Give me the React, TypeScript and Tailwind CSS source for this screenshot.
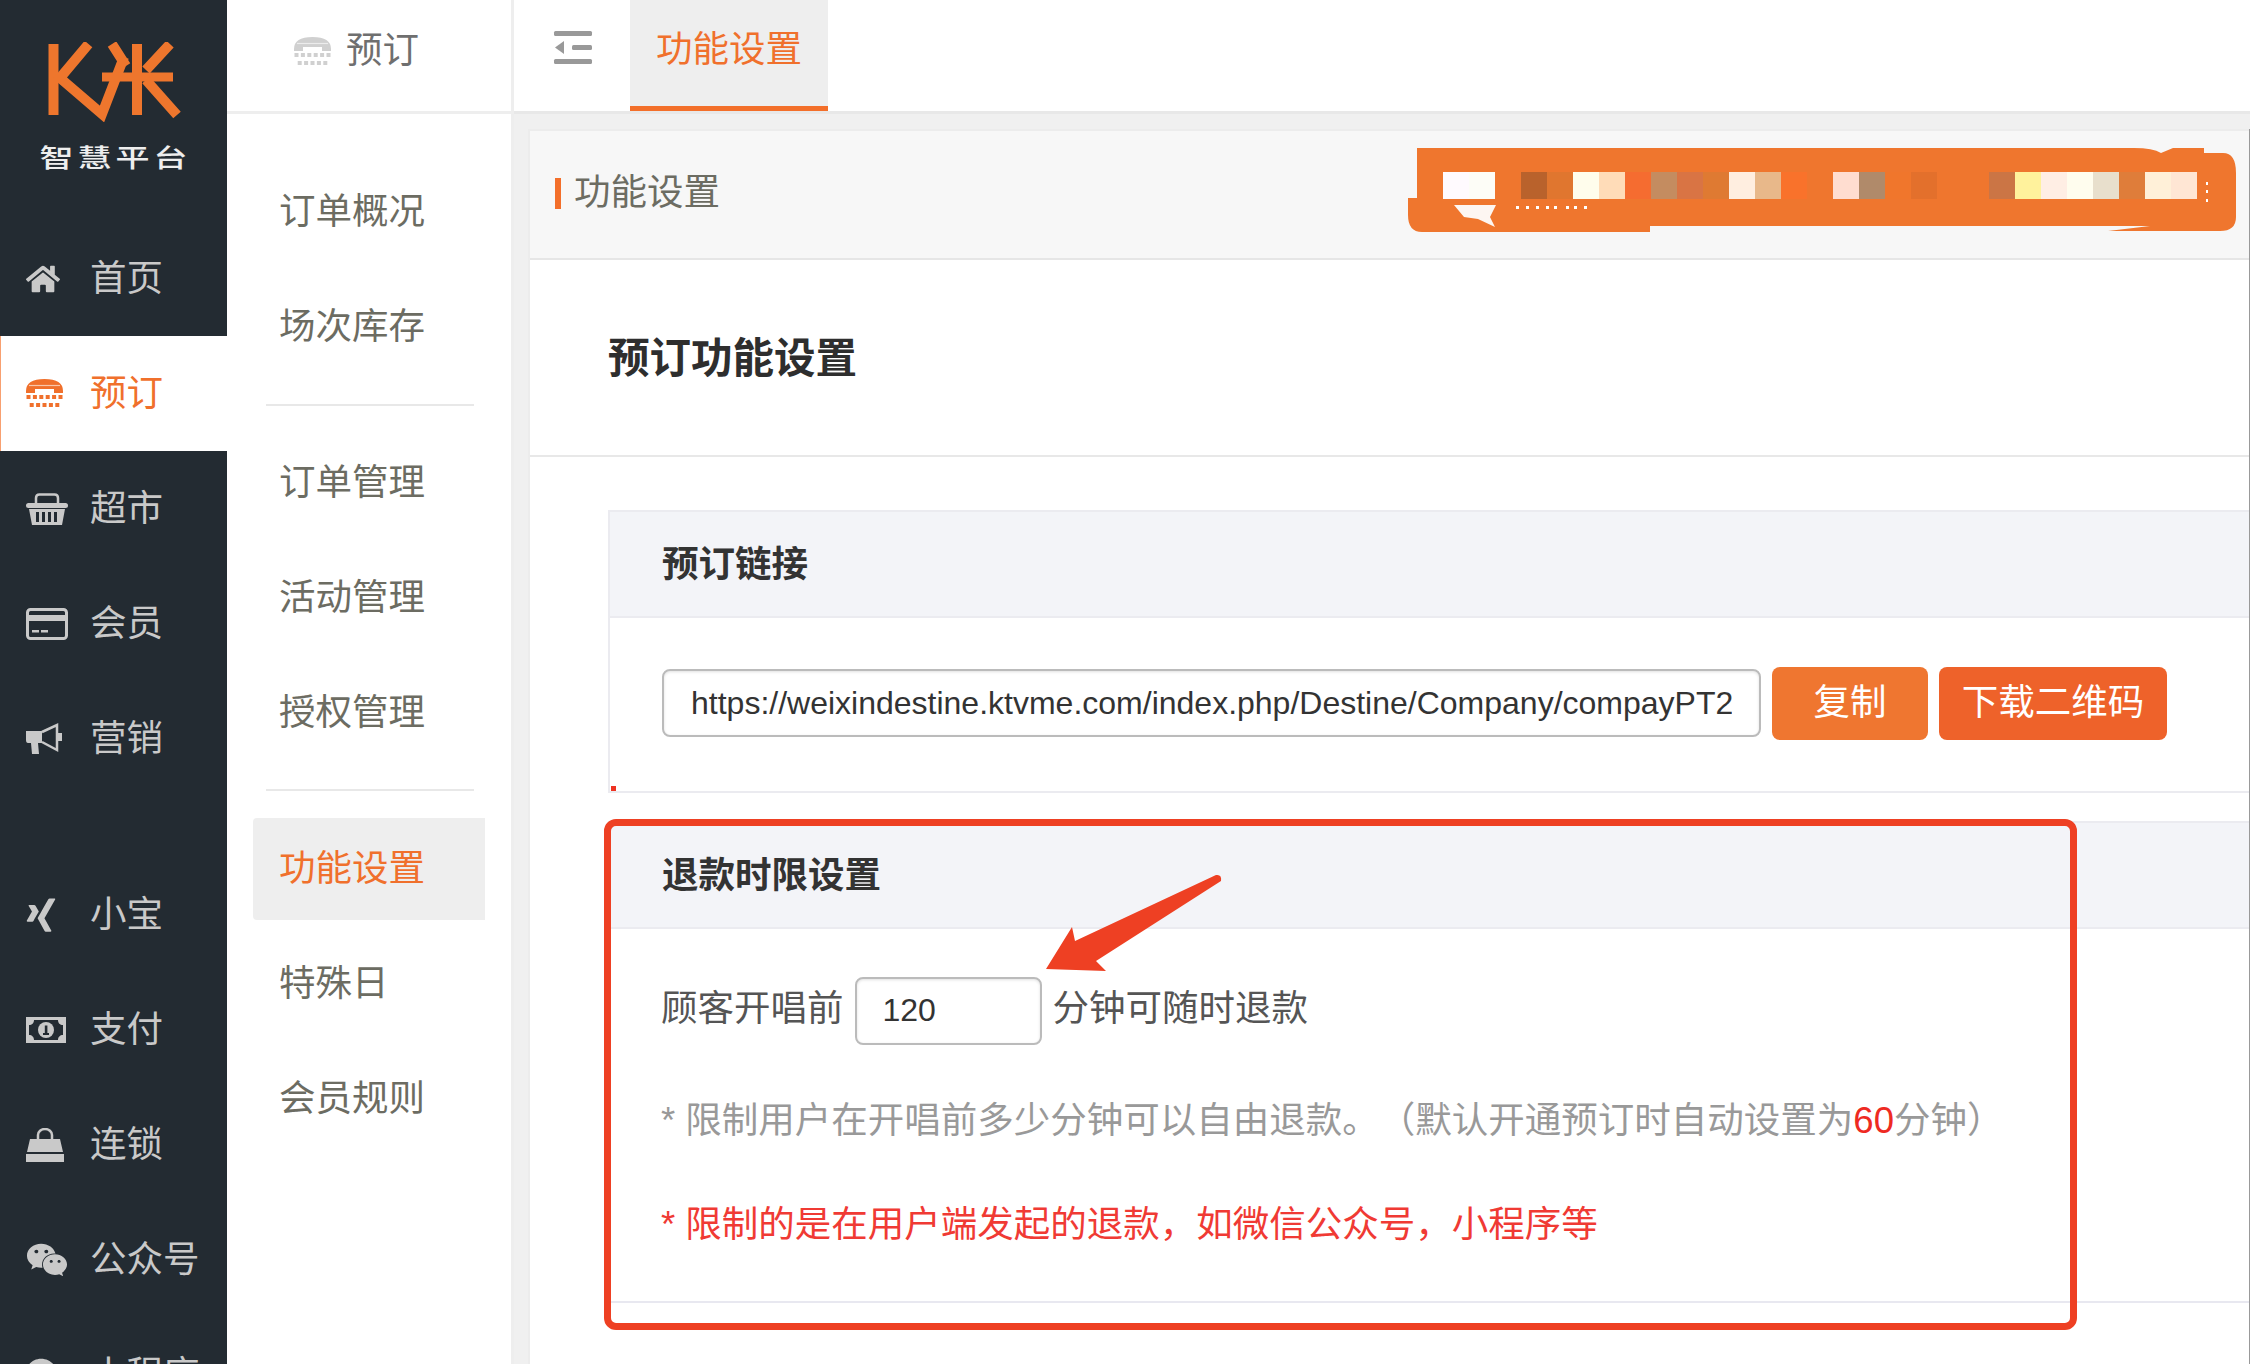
import React from "react";
import { FaHome, FaWeixin, FaXing } from "react-icons/fa";

const fontStack = `"Liberation Sans", "Noto Sans CJK SC", sans-serif`;

const TtyIcon = ({ className }: { className?: string }) => (
  <svg width="37" height="29" viewBox="0 0 37 29" fill="currentColor" className={className}>
    <path d="M0 12Q0 0 18.5 0T37 12V14H28V10H9V14H0z" />
    <path d="M3 6.5H34" stroke="#ffffff" strokeOpacity="0.6" strokeWidth="1.2" />
    {[0, 1, 2, 3, 4, 5].map((i) => (
      <rect key={i} x={0.5 + i * 6.4} y={16} width={4} height={4} />
    ))}
    {[0, 1, 2, 3, 4].map((i) => (
      <rect key={i} x={3.7 + i * 6.4} y={24} width={4} height={4} />
    ))}
  </svg>
);

const BasketIcon = () => (
  <svg width="42" height="34" viewBox="0 0 42 34" fill="none">
    <path d="M10 12V6q0-3.5 3.5-3.5h15Q32 2.500 32 6v6" stroke="currentColor" strokeWidth="2.500" />
    <rect x="0" y="11" width="42" height="5" rx="2.500" fill="currentColor" />
    <path d="M3 17H39L36 33H6z" fill="currentColor" />
    {[10, 16, 22, 28].map((x) => (
      <rect key={x} x={x} y={20} width={3} height={10} fill="#232b32" />
    ))}
  </svg>
);

const CardIcon = () => (
  <svg width="42" height="32" viewBox="0 0 42 32" fill="none">
    <rect x="1.500" y="1.500" width="39" height="29" rx="3" stroke="currentColor" strokeWidth="3" />
    <rect x="2" y="7" width="38" height="6" fill="currentColor" />
    <rect x="6" y="22" width="7" height="2.500" fill="currentColor" />
    <rect x="15" y="22" width="7" height="2.500" fill="currentColor" />
  </svg>
);

const HornIcon = () => (
  <svg width="37" height="32" viewBox="0 0 37 32">
    <path fill="currentColor" d="M0 8H16V20H12L13 31H6L5 20H2Q0 20 0 17z" />
    <path d="M16 9 31 2V27L16 19" fill="none" stroke="currentColor" strokeWidth="2.500" />
    <path fill="currentColor" d="M32 10h4v8h-4z" />
  </svg>
);

const MoneyIcon = () => (
  <svg width="40" height="26" viewBox="0 0 40 26">
    <path
      fillRule="evenodd"
      fill="currentColor"
      d="M0 0h40v26H0zM3 8v10c3 0 5 2 5 5h24c0-3 2-5 5-5V8c-3 0-5-2-5-5H8c0 3-2 5-5 5z"
    />
    <circle cx="20" cy="13" r="8" fill="currentColor" />
    <rect x="18.800" y="8.500" width="2.600" height="9" fill="#232b32" />
    <rect x="17" y="16" width="6" height="2" fill="#232b32" />
  </svg>
);

const BagIcon = () => (
  <svg width="38" height="34" viewBox="0 0 38 34">
    <path d="M12 11V7a7 6 0 0 1 14 0v4" fill="none" stroke="currentColor" strokeWidth="2.500" />
    <path fill="currentColor" d="M4 11h30l3 13H1zM0 26h38v8H0z" />
  </svg>
);

const navTop = [
  { label: "首页", icon: <FaHome size={34} /> },
  { label: "预订", icon: <TtyIcon />, active: true },
  { label: "超市", icon: <BasketIcon /> },
  { label: "会员", icon: <CardIcon /> },
  { label: "营销", icon: <HornIcon /> },
];

const navBottom = [
  { label: "小宝", icon: <FaXing size={38} className="-ml-[4px]" /> },
  { label: "支付", icon: <MoneyIcon /> },
  { label: "连锁", icon: <BagIcon /> },
  { label: "公众号", icon: <FaWeixin size={42} /> },
  { label: "小程序", icon: <FaWeixin size={42} /> },
];

const mosaic = [
  ["#fffafe", 0], ["#fdfdf7", 1], ["#b9622c", 3], ["#e0762f", 4], ["#fffdec", 5], ["#ffdcb8", 6],
  ["#f56c30", 7], ["#c48c60", 8], ["#d97444", 9], ["#df7a32", 10], ["#ffeee0", 11], ["#e8b88a", 12],
  ["#f9722b", 13], ["#ffddd0", 15], ["#b08a6a", 16], ["#f0762c", 17], ["#e3702c", 18], ["#cb7545", 21],
  ["#fff29c", 22], ["#ffeee4", 23], ["#fffdee", 24], ["#e8dfcc", 25], ["#df7d3a", 26], ["#fff0d8", 27],
  ["#ffe6d4", 28],
] as const;

const Logo = () => (
  <svg width="140" height="80" viewBox="0 0 140 80" fill="none" stroke="#ee762d" strokeWidth="10">
    <path d="M9.500 2v71" />
    <path d="M44.500 2 16 36 58 72 80 15" />
    <path d="M58 35h71" strokeWidth="9" />
    <path d="M93 2v71" />
    <path d="M68 2 82 24M126 2 102 28M102 38 133 73" />
  </svg>
);

const NavRow = ({ item }: { item: any }) => (
  <div
    className={
      item.active
        ? "flex h-[115px] items-center bg-white border-l border-l-[#f8a070] text-[#f0702c] pl-[25px]"
        : "flex h-[115px] items-center text-[#c9c9c9] pl-[26px]"
    }
  >
    <div className="w-[64px] flex items-center">{item.icon}</div>
    <span className="pt-[2px] text-[36.500px] whitespace-nowrap">{item.label}</span>
  </div>
);

const SubItem = ({ label }: { label: string }) => (
  <div className="h-[115px] flex items-center pl-[52px] pt-[2px] text-[36.500px] text-[#6c6c62]">{label}</div>
);

const App = () => {
  return (
    <div
      className="flex h-screen w-full overflow-hidden bg-white"
      style={{ fontFamily: fontStack }}
    >
      {/* main nav */}
      <div className="w-[227px] shrink-0 bg-[#232b32]">
        <div className="h-[221px] flex flex-col items-center pt-[42px]">
          <Logo />
          <div className="mt-[21px] text-[34px] font-medium leading-[30px] tracking-[4px] pl-[4px] text-[#eeeeee] whitespace-nowrap scale-y-[0.75]">
            智慧平台
          </div>
        </div>
        {navTop.map((item) => (
          <NavRow key={item.label} item={item} />
        ))}
        <div className="h-[61px]" />
        {navBottom.map((item) => (
          <NavRow key={item.label} item={item} />
        ))}
      </div>

      {/* sub nav */}
      <div className="w-[287px] shrink-0 border-r-[3px] border-r-[#eeeeee]">
        <div className="h-[114px] flex items-center border-b-[3px] border-b-[#eeeeee] pl-[67px] pb-[9px]">
          <TtyIcon className="text-[#d0d0d0]" />
          <span className="ml-[15px] text-[36.500px] text-[#6f6f6f]">预订</span>
        </div>
        <div className="pt-[40px]">
          <SubItem label="订单概况" />
          <SubItem label="场次库存" />
          <div className="mx-[39px] mt-[20px] mb-[19px] h-[2px] w-[208px] bg-[#e8e8e8]" />
          <SubItem label="订单管理" />
          <SubItem label="活动管理" />
          <SubItem label="授权管理" />
          <div className="mx-[39px] mt-[19px] h-[2px] w-[208px] bg-[#e8e8e8]" />
          <div className="ml-[26px] mt-[27px] mb-[6px] w-[232px] h-[102px] rounded-l-[4px] bg-[#eeeeee] flex items-center pl-[26px] text-[36.500px] text-[#f0702c]">
            功能设置
          </div>
          <SubItem label="特殊日" />
          <SubItem label="会员规则" />
        </div>
      </div>

      {/* content */}
      <div className="flex-1 min-w-0 flex flex-col">
        <div className="h-[114px] shrink-0 flex border-b-[3px] border-b-[#e8e8e8] pl-[39px]">
          <div className="w-[77px] pt-[31px]">
            <svg width="40" height="34" viewBox="0 0 40 34" fill="#999999">
              <rect x="1" y="0" width="38" height="5" rx="1.500" />
              <rect x="19" y="14" width="20" height="5" rx="1.500" />
              <rect x="1" y="28" width="38" height="5" rx="1.500" />
              <path d="M2 16.500 11 10v13z" />
            </svg>
          </div>
          <div className="w-[198px] h-[111px] bg-[#eeeeee] border-b-[5px] border-b-[#f36f2a] pt-[22px] text-center text-[36.500px] leading-[56px] text-[#f0702c]">
            功能设置
          </div>
        </div>

        <div className="flex-1 min-h-0 bg-[#f0f0f0] pl-[14px] pt-[15px]">
          <div className="h-full bg-white border-r border-r-[#999999] border-l-2 border-l-[#ececec]">
            <div className="h-[131px] flex items-center justify-between border-t-2 border-b-2 border-t-[#ececec] border-b-[#e6e6e6] bg-[#f7f7f7] pl-[25px] pr-[13px]">
              <div className="flex items-center pb-[2px]">
                <div className="w-[6px] h-[31px] bg-[#f36f2a]" />
                <span className="ml-[13px] text-[36.500px] text-[#6c6c62]">功能设置</span>
              </div>
              <svg width="828" height="90" viewBox="0 0 828 90" className="mt-[-9px]">
                <path
                  fill="#ef762e"
                  d="M9 3H726Q745 3 753 8L765 3H796V8H815Q828 8 828 28V72Q828 86 812 86H700L742 81H242V87H14Q0 87 0 70V53H9z"
                />
                {mosaic.map(([color, i]) => (
                  <rect key={i} x={35 + i * 26} y={27} width={26} height={27} fill={color} />
                ))}
                <path d="M46 60H88L82 72 87 82 70 74 56 72z" fill="#fdf6f2" />
                {[98, 108, 118, 128, 136, 148, 156, 166].map((x) => (
                  <rect key={x} x={x + 10} y={61} width={3} height={3} fill="#ffffff" />
                ))}
                {[37, 45, 54].map((y) => (
                  <rect key={y} x={798} y={y} width={2} height={3} fill="#ffffff" />
                ))}
              </svg>
            </div>

            <div className="h-[197px] flex items-center border-b-2 border-b-[#e8e8e8] pl-[78px] pt-[4px] text-[41.500px] font-bold text-[#2e2e2e]">
              预订功能设置
            </div>

            <div className="ml-[78px] mt-[53px]">
              {/* booking link */}
              <div className="relative border-l-2 border-l-[#ebebf0] border-b-2 border-b-[#ebebf0]">
                <div className="h-[108px] flex items-center border-t-2 border-b-2 border-[#ebebf0] bg-[#f3f4f8] pl-[52px] pt-[2px] text-[36.500px] font-bold text-[#333333]">
                  预订链接
                </div>
                <div className="h-[173px] flex items-center gap-[11px] pl-[52px] pb-[3px]">
                  <input
                    readOnly
                    value="https://weixindestine.ktvme.com/index.php/Destine/Company/compayPT2"
                    className="w-[1099px] h-[68px] rounded-[8px] border-2 border-[#bbbbbb] px-[27px] text-[32px] text-[#333333] shadow-[inset_0_1px_3px_rgba(0,0,0,0.12)] outline-none"
                  />
                  <button className="w-[156px] h-[73px] rounded-[8px] bg-[#ef7630] text-[36.500px] text-white">
                    复制
                  </button>
                  <button className="w-[228px] h-[73px] rounded-[8px] bg-[#ee622a] text-[36.500px] text-white">
                    下载二维码
                  </button>
                </div>
                <div className="absolute left-[1px] bottom-[0px] w-[5px] h-[5px] bg-[#ee3322]" />
              </div>

              {/* refund limit */}
              <div className="relative mt-[28px] border-b-2 border-b-[#e8e8f0]">
                <div className="h-[108px] flex items-center border-t-2 border-b-2 border-[#ebebf0] bg-[#f3f4f8] pl-[54px] pt-[2px] text-[36.500px] font-bold text-[#333333]">
                  退款时限设置
                </div>
                <div className="h-[372px] pl-[53px] pt-[45px] [text-spacing-trim:space-all]">
                  <div className="flex items-center h-[70px] text-[36.500px] text-[#555555]">
                    <span>顾客开唱前</span>
                    <input
                      readOnly
                      value="120"
                      className="mx-[11px] mt-[3px] w-[187px] h-[68px] rounded-[8px] border-2 border-[#bbbbbb] px-[26px] text-[32px] text-[#333333] shadow-[inset_0_1px_3px_rgba(0,0,0,0.12)] outline-none"
                    />
                    <span>分钟可随时退款</span>
                  </div>
                  <div className="mt-[51px] h-[52px] text-[36.500px] leading-[52px] text-[#999999] whitespace-nowrap">
                    * 限制用户在开唱前多少分钟可以自由退款。（默认开通预订时自动设置为
                    <span className="text-[#ee2a22]">60</span>分钟）
                  </div>
                  <div className="mt-[52px] h-[52px] text-[36.500px] leading-[52px] text-[#f03a34] whitespace-nowrap">
                    * 限制的是在用户端发起的退款，如微信公众号，小程序等
                  </div>
                </div>

                {/* annotation over the screenshot */}
                <div className="absolute -left-[4px] -top-[2px] w-[1473px] h-[511px] rounded-[12px] border-[7px] border-[#ee4023]" />
                <svg
                  className="absolute left-[436px] top-[49px]"
                  width="180"
                  height="110"
                  viewBox="0 0 180 110"
                  fill="#ee4023"
                >
                  <path d="M2 99 28 57 31 71 172 5q6-1 5 6L52 91l10 10z" />
                </svg>
              </div>
            </div>
          </div>
        </div>
      </div>
    </div>
  );
};

export default App;
